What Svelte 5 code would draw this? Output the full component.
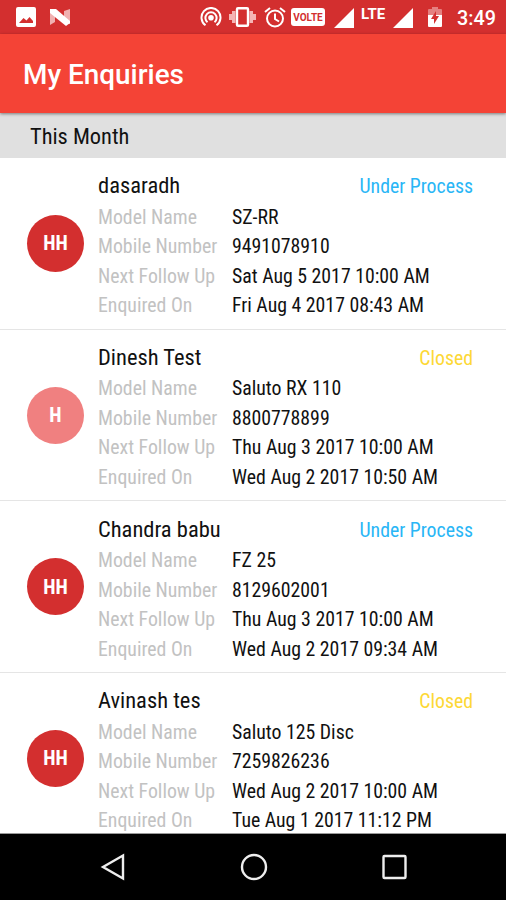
<script>
    const enquiries = [
        { name: 'dasaradh', badge: 'HH', status: 'Under Process', model: 'SZ-RR', mobile: '9491078910', followUp: 'Sat Aug 5 2017 10:00 AM', enquired: 'Fri Aug 4 2017 08:43 AM' },
        { name: 'Dinesh Test', badge: 'H', status: 'Closed', model: 'Saluto RX 110', mobile: '8800778899', followUp: 'Thu Aug 3 2017 10:00 AM', enquired: 'Wed Aug 2 2017 10:50 AM' },
        { name: 'Chandra babu', badge: 'HH', status: 'Under Process', model: 'FZ 25', mobile: '8129602001', followUp: 'Thu Aug 3 2017 10:00 AM', enquired: 'Wed Aug 2 2017 09:34 AM' },
        { name: 'Avinash tes', badge: 'HH', status: 'Closed', model: 'Saluto 125 Disc', mobile: '7259826236', followUp: 'Wed Aug 2 2017 10:00 AM', enquired: 'Tue Aug 1 2017 11:12 PM' }
    ];
</script>

<div class="screen">
    <div class="status-bar">
        <svg class="image" width="20" height="20" viewBox="0 0 20 20">
            <path fill="#fff" fill-rule="evenodd" d="M2 0h16a2 2 0 0 1 2 2v16a2 2 0 0 1-2 2H2a2 2 0 0 1-2-2V2a2 2 0 0 1 2-2zM3 16h14v-2l-3.500-4-3 3.500-3-2.500z" />
        </svg>
        <svg class="nougat" width="22" height="18" viewBox="0 0 22 18">
            <path fill="#f0b0b0" d="M1 2h5v12l-5 3zM15 3l6-2v15h-6z" />
            <path fill="#fff" d="M1 1h6l14 12v2l-4 3L1 5z" />
        </svg>
        <svg class="hotspot" width="22" height="20" viewBox="0 0 22 20" fill="none" stroke="#fff" stroke-width="2">
            <path d="M5.5 18.200a9.500 9.500 0 1 1 11 0M7.500 15.300a5.600 5.600 0 1 1 7 0" />
            <circle cx="11" cy="10.800" r="1.800" fill="#fff" />
        </svg>
        <svg class="vibrate" width="27" height="20" viewBox="0 0 27 20">
            <path fill="#f5b4b4" d="M0 7h3v6H0zM3 4h3.500v12H3zM24 7h3v6h-3zM20.500 4h3.500v12h-3.500z" />
            <rect x="8" y="1.200" width="11" height="17.600" rx="1" fill="none" stroke="#fff" stroke-width="2.400" />
        </svg>
        <svg class="alarm" width="22" height="21" viewBox="0 0 22 21" fill="none" stroke="#fff" stroke-width="2">
            <circle cx="11" cy="11.500" r="8" />
            <path d="M1 5l5-4M21 5l-5-4M11 6.500v5.500l4 2.500" />
        </svg>
        <span class="volte">VOLTE</span>
        <svg class="signal" width="20" height="20" viewBox="0 0 20 20"><path fill="#fff" d="M20 0v20H0z" /></svg>
        <span class="lte">LTE</span>
        <svg class="signal second" width="20" height="20" viewBox="0 0 20 20"><path fill="#fff" d="M20 0v20H0z" /></svg>
        <svg class="battery" width="14" height="20" viewBox="0 0 14 20">
            <path fill="#e58080" d="M4 0h6v2h3a1 1 0 0 1 1 1v5H0V3a1 1 0 0 1 1-1h3z" />
            <path fill="#fff" d="M0 8h14v11a1 1 0 0 1-1 1H1a1 1 0 0 1-1-1z" />
            <path fill="#d32f2f" d="M8 4l-5 8h3v5l5-8H8z" />
        </svg>
        <span class="clock">3:49</span>
    </div>

    <header class="toolbar"><h1>My Enquiries</h1></header>
    <div class="section-title"><span>This Month</span></div>

    <main class="list">
        {#each enquiries as item}
            <article class="enquiry">
                <div class="avatar" class:light={item.badge === 'H'}>{item.badge}</div>
                <div class="details">
                    <div class="heading">
                        <span class="name">{item.name}</span>
                        <span class="status" class:closed={item.status === 'Closed'}>{item.status}</span>
                    </div>
                    <dl>
                        <dt>Model Name</dt><dd>{item.model}</dd>
                        <dt>Mobile Number</dt><dd>{item.mobile}</dd>
                        <dt>Next Follow Up</dt><dd>{item.followUp}</dd>
                        <dt>Enquired On</dt><dd>{item.enquired}</dd>
                    </dl>
                </div>
            </article>
        {/each}
    </main>

    <nav class="nav-bar">
        <svg width="28" height="28" viewBox="0 0 28 28"><path d="M24 2.500v23L4 14z" /></svg>
        <svg width="28" height="28" viewBox="0 0 28 28"><circle cx="14" cy="14" r="12" /></svg>
        <svg width="28" height="28" viewBox="0 0 28 28"><rect x="3.500" y="3" width="22" height="22" rx="1" /></svg>
    </nav>
</div>

<style>
    :global(body) {
        margin: 0;
    }

    .screen {
        display: flex;
        flex-direction: column;
        width: 506px;
        height: 900px;
        overflow: hidden;
        background: #fff;
        font-family: 'Roboto Condensed', Roboto, sans-serif;
        font-stretch: 75%;
        color: #111;
    }

    .status-bar {
        display: flex;
        align-items: center;
        flex: none;
        height: 34px;
        padding-left: 16px;
        box-sizing: border-box;
        background: #d32f2f;
        color: #fff;
        font-family: Roboto, sans-serif;
        font-stretch: 100%;
    }

    .status-bar > * {
        flex: none;
    }

    .nougat {
        margin-left: 13px;
    }

    .hotspot {
        margin-left: 129px;
    }

    .vibrate {
        margin-left: 7px;
    }

    .alarm {
        margin-left: 8px;
    }

    .volte {
        width: 34px;
        height: 18px;
        margin-left: 5px;
        border-radius: 3px;
        background: #fff;
        color: #d32f2f;
        font-size: 10px;
        font-weight: 700;
        line-height: 19px;
        text-align: center;
    }

    .signal {
        margin: 2px 0 0 9px;
    }

    .lte {
        width: 26px;
        margin-left: 7px;
        padding-bottom: 7px;
        font-size: 15px;
        font-weight: 700;
        line-height: 16px;
    }

    .signal.second {
        margin-left: 6px;
    }

    .battery {
        margin-left: 15px;
    }

    .clock {
        margin: 2px 0 0 15px;
        font-size: 19.8px;
        font-weight: 500;
    }

    .toolbar {
        position: relative;
        display: flex;
        align-items: center;
        flex: none;
        height: 79px;
        padding-left: 23px;
        background: #f44336;
        box-shadow: 0 1px 3px rgba(0, 0, 0, 0.45);
    }

    h1 {
        margin: 2px 0 0;
        color: #fff;
        font-family: Roboto, sans-serif;
        font-size: 27.9px;
        font-stretch: 100%;
        font-weight: 500;
    }

    .section-title {
        flex: none;
        height: 45px;
        padding-left: 30px;
        background: #e0e0e0;
        font-size: 22.4px;
        line-height: 47px;
    }

    .list {
        flex: none;
        height: 675px;
        overflow: hidden;
        border-bottom: 1px solid #999;
    }

    .enquiry {
        display: flex;
        align-items: center;
        height: 171.7px;
        padding: 0 33px 0 27px;
        box-sizing: border-box;
        border-bottom: 1.5px solid #e5e5e5;
    }

    .avatar {
        display: flex;
        align-items: center;
        justify-content: center;
        flex: none;
        width: 57px;
        height: 57px;
        border-radius: 50%;
        background: #d32f2f;
        color: #fff;
        font-size: 20px;
        font-weight: 700;
    }

    .avatar.light {
        background: #f08080;
    }

    .details {
        flex: 1;
        margin: 4.4px 0 0 14px;
    }

    .heading {
        display: flex;
        justify-content: space-between;
        height: 32.4px;
        line-height: 31px;
        white-space: nowrap;
    }

    .name {
        font-size: 22.5px;
    }

    .status {
        padding-top: 1px;
        color: #29b6f6;
        font-size: 19.8px;
    }

    .status.closed {
        color: #fdd835;
    }

    dl {
        display: grid;
        grid-template-columns: 134px 1fr;
        grid-auto-rows: 29.6px;
        margin: 0;
        font-size: 19.8px;
        line-height: 30px;
        white-space: nowrap;
    }

    dt {
        color: #c2c2c2;
    }

    dd {
        margin: 0;
    }

    .nav-bar {
        display: flex;
        align-items: center;
        justify-content: space-between;
        flex: 1;
        padding: 0 98px 0 99px;
        background: #000;
    }

    .nav-bar svg {
        fill: none;
        stroke: #eee;
        stroke-width: 2.4;
    }
</style>
